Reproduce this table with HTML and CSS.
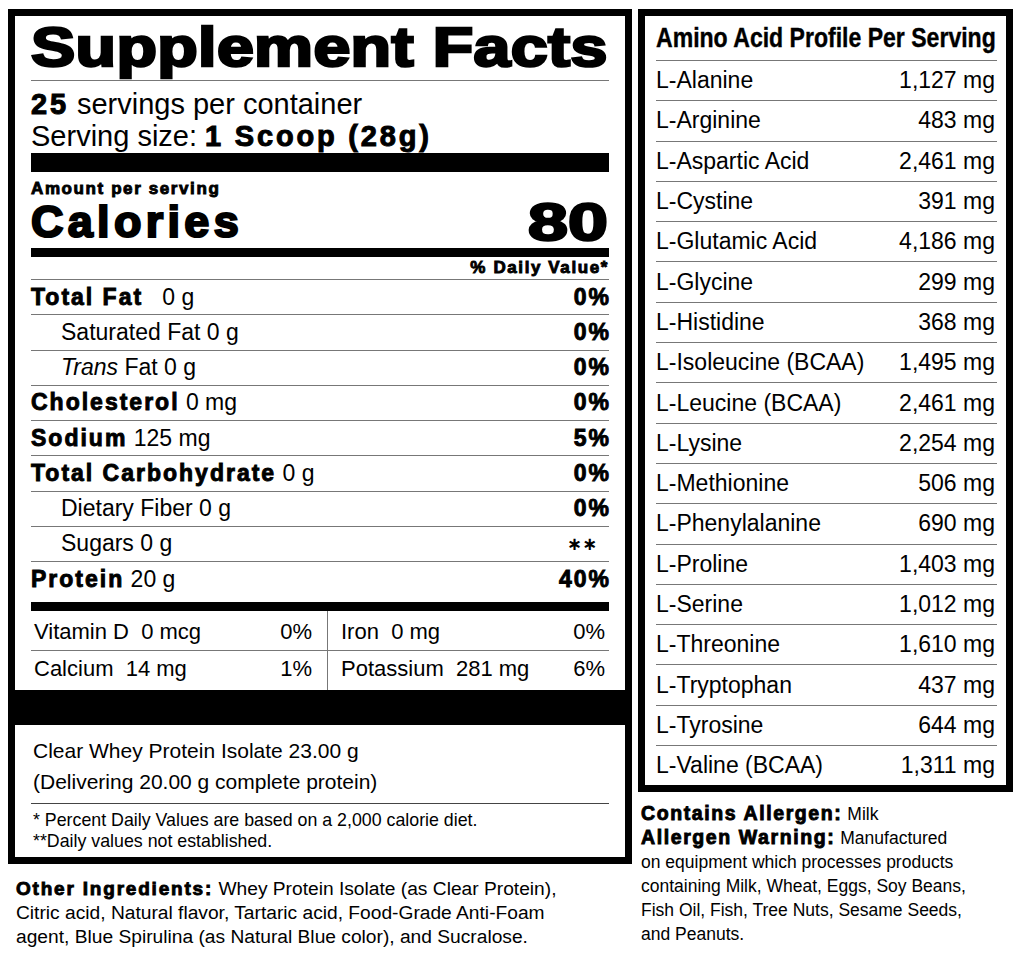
FILE: index.html
```html
<!DOCTYPE html>
<html lang="en">
<head>
<meta charset="utf-8">
<title>Supplement Facts</title>
<link rel="stylesheet" href="styles.css">
</head>
<body>
<div class="page">
  <div class="left">
    <div class="label">
      <section class="facts">
        <h1 class="title"><span class="title-text">Supplement Facts</span></h1>
        <div class="serv">
          <div><b class="blk">25</b> servings per container</div>
          <div>Serving size: <b class="blk">1 Scoop (28g)</b></div>
        </div>
        <div class="bar bar-lg"></div>
        <div class="amount blk">Amount per serving</div>
        <div class="cal"><b class="blk cal-label">Calories</b><b class="blk cal-num">80</b></div>
        <div class="bar bar-md"></div>
        <div class="dv blk">% Daily Value*</div>
        <div class="nrow"><span><b class="blk">Total Fat</b>&nbsp;&nbsp; 0 g</span><b class="blk pct">0%</b></div>
        <div class="nrow sub"><span>Saturated Fat 0 g</span><b class="blk pct">0%</b></div>
        <div class="nrow sub"><span><i>Trans</i> Fat 0 g</span><b class="blk pct">0%</b></div>
        <div class="nrow"><span><b class="blk">Cholesterol</b> 0 mg</span><b class="blk pct">0%</b></div>
        <div class="nrow"><span><b class="blk">Sodium</b> 125 mg</span><b class="blk pct">5%</b></div>
        <div class="nrow"><span><b class="blk">Total Carbohydrate</b> 0 g</span><b class="blk pct">0%</b></div>
        <div class="nrow sub"><span>Dietary Fiber 0 g</span><b class="blk pct">0%</b></div>
        <div class="nrow sub"><span>Sugars 0 g</span><b class="stars">∗∗</b></div>
        <div class="nrow last"><span><b class="blk">Protein</b> 20 g</span><b class="blk pct">40%</b></div>
        <div class="bar bar-md bar-vit"></div>
        <div class="vits">
          <div class="vcell l top"><span>Vitamin D&nbsp; 0 mcg</span><span>0%</span></div>
          <div class="vcell r top"><span>Iron&nbsp; 0 mg</span><span>0%</span></div>
          <div class="vcell l"><span>Calcium&nbsp; 14 mg</span><span>1%</span></div>
          <div class="vcell r"><span>Potassium&nbsp; 281 mg</span><span>6%</span></div>
        </div>
      </section>
      <section class="extra">
        <div class="whey">
          <div>Clear Whey Protein Isolate 23.00 g</div>
          <div>(Delivering 20.00 g complete protein)</div>
        </div>
        <div class="notes">
          <div>* Percent Daily Values are based on a 2,000 calorie diet.</div>
          <div>**Daily values not established.</div>
        </div>
      </section>
    </div>
    <p class="ingredients"><b class="blk">Other Ingredients:</b> Whey Protein Isolate (as Clear Protein),<br>Citric acid, Natural flavor, Tartaric acid, Food-Grade Anti-Foam<br>agent, Blue Spirulina (as Natural Blue color), and Sucralose.</p>
  </div>
  <div class="right">
    <div class="amino">
      <h2 class="amino-title"><span class="amino-title-text">Amino Acid Profile Per Serving</span></h2>
      <div class="arow"><span>L-Alanine</span><span>1,127 mg</span></div>
      <div class="arow"><span>L-Arginine</span><span>483 mg</span></div>
      <div class="arow"><span>L-Aspartic Acid</span><span>2,461 mg</span></div>
      <div class="arow"><span>L-Cystine</span><span>391 mg</span></div>
      <div class="arow"><span>L-Glutamic Acid</span><span>4,186 mg</span></div>
      <div class="arow"><span>L-Glycine</span><span>299 mg</span></div>
      <div class="arow"><span>L-Histidine</span><span>368 mg</span></div>
      <div class="arow"><span>L-Isoleucine (BCAA)</span><span>1,495 mg</span></div>
      <div class="arow"><span>L-Leucine (BCAA)</span><span>2,461 mg</span></div>
      <div class="arow"><span>L-Lysine</span><span>2,254 mg</span></div>
      <div class="arow"><span>L-Methionine</span><span>506 mg</span></div>
      <div class="arow"><span>L-Phenylalanine</span><span>690 mg</span></div>
      <div class="arow"><span>L-Proline</span><span>1,403 mg</span></div>
      <div class="arow"><span>L-Serine</span><span>1,012 mg</span></div>
      <div class="arow"><span>L-Threonine</span><span>1,610 mg</span></div>
      <div class="arow"><span>L-Tryptophan</span><span>437 mg</span></div>
      <div class="arow"><span>L-Tyrosine</span><span>644 mg</span></div>
      <div class="arow"><span>L-Valine (BCAA)</span><span>1,311 mg</span></div>
    </div>
    <div class="allergen">
      <div class="allergen-line"><b class="blk">Contains Allergen:</b> Milk</div>
      <div class="allergen-warn"><b class="blk">Allergen Warning:</b> Manufactured<br>on equipment which processes products<br>containing Milk, Wheat, Eggs, Soy Beans,<br>Fish Oil, Fish, Tree Nuts, Sesame Seeds,<br>and Peanuts.</div>
    </div>
  </div>
</div>
</body>
</html>
```

FILE: styles.css
```css
* { box-sizing: border-box; margin: 0; padding: 0; }
html, body { background: #fff; }
body {
  font-family: "Liberation Sans", Arial, Helvetica, sans-serif;
  color: #000;
  width: 1023px;
  height: 964px;
  overflow: hidden;
}
.page {
  display: flex;
  align-items: flex-start;
  gap: 6px;
  padding: 9px 0 0 8px;
}
.left { width: 624px; flex: none; }
.label {
  border: 7px solid #000;
  background: #000;
  display: flex;
  flex-direction: column;
  gap: 35px;
}
.blk {
  font-weight: 700;
  -webkit-text-stroke: 0.9px #000;
  letter-spacing: 2px;
}
.facts {
  background: #fff;
  padding: 0 16px;
  height: 674px;
}
.title {
  font-size: 55px;
  line-height: 54px;
  font-weight: 700;
  white-space: nowrap;
  padding: 4px 0 6px;
  border-bottom: 1px solid #777;
}
.title-text {
  display: inline-block;
  letter-spacing: 0.3px;
  -webkit-text-stroke: 2.6px #000;
  transform: scaleX(1.205);
  transform-origin: left center;
}
.serv {
  font-size: 29px;
  line-height: 32px;
  padding-top: 7px;
  white-space: nowrap;
}
.serv .blk { letter-spacing: 2.8px; -webkit-text-stroke: 1px #000; }
.bar { background: #000; }
.bar-lg { height: 19px; margin-top: 1px; }
.bar-md { height: 9px; margin-top: 2px; }
.bar-vit { margin-top: 5px; }
.amount {
  font-size: 17px;
  line-height: 18px;
  letter-spacing: 1.6px;
  margin-top: 8px;
}
.cal {
  display: flex;
  justify-content: space-between;
  align-items: center;
  height: 48px;
}
.cal-label {
  font-size: 45px;
  letter-spacing: 4.3px;
  -webkit-text-stroke: 2.2px #000;
}
.cal-num {
  font-size: 52px;
  letter-spacing: 0;
  -webkit-text-stroke: 2.4px #000;
  transform: scaleX(1.38);
  transform-origin: right center;
  margin-right: 1px;
}
.dv {
  font-size: 17px;
  line-height: 22px;
  letter-spacing: 1.6px;
  text-align: right;
  border-bottom: 1px solid #777;
}
.nrow {
  display: flex;
  justify-content: space-between;
  align-items: center;
  height: 35.25px;
  border-bottom: 1px solid #777;
  font-size: 23px;
  white-space: nowrap;
}
.nrow.sub { padding-left: 30px; }
.nrow.last { border-bottom: 0; height: 35px; }
.pct { margin-right: -2px; }
.stars {
  font-family: "DejaVu Sans", sans-serif;
  font-weight: 700;
  font-size: 18px;
  margin-right: 12px;
}
.vits {
  display: grid;
  grid-template-columns: 297px 1fr;
  font-size: 22px;
}
.vcell {
  display: flex;
  justify-content: space-between;
  align-items: center;
  height: 39.5px;
  white-space: nowrap;
}
.vcell.top { border-bottom: 1px solid #777; padding-top: 3px; }
.vcell.l { border-right: 1px solid #777; padding-left: 3px; padding-right: 15px; }
.vcell.r { padding-left: 13px; padding-right: 4px; }
.vcell:not(.top) { padding-bottom: 3px; }
.extra {
  background: #fff;
  padding: 10px 16px 5px;
  height: 132px;
}
.whey {
  font-size: 21px;
  line-height: 31px;
  padding: 0 0 6px 2px;
  border-bottom: 1px solid #444;
}
.notes {
  font-size: 17.8px;
  line-height: 21px;
  padding: 6px 0 0 2px;
}
.ingredients {
  font-size: 19.2px;
  line-height: 24px;
  margin-top: 13px;
  padding-left: 8px;
  white-space: nowrap;
}
.ingredients .blk {
  font-size: 19px;
  line-height: 20px;
  letter-spacing: 1.8px;
}
.right { width: 375px; flex: none; }
.amino {
  border: 7px solid #000;
  padding: 0 9px 0 11px;
}
.amino-title {
  font-weight: 700;
  font-size: 28px;
  line-height: 44px;
  white-space: nowrap;
}
.amino-title-text {
  display: inline-block;
  transform: scaleX(0.823);
  transform-origin: left center;
  -webkit-text-stroke: 0.4px #000;
}
.arow {
  display: flex;
  justify-content: space-between;
  align-items: center;
  height: 40.3px;
  border-top: 1px solid #777;
  font-size: 23px;
  padding-right: 2px;
  white-space: nowrap;
}
.allergen {
  font-size: 17.5px;
  padding: 10px 0 0 3px;
  white-space: nowrap;
}
.allergen-line { line-height: 25px; }
.allergen-warn { line-height: 23.8px; }
.allergen .blk {
  font-size: 19.5px;
  line-height: 18px;
  letter-spacing: 1.6px;
}
```
